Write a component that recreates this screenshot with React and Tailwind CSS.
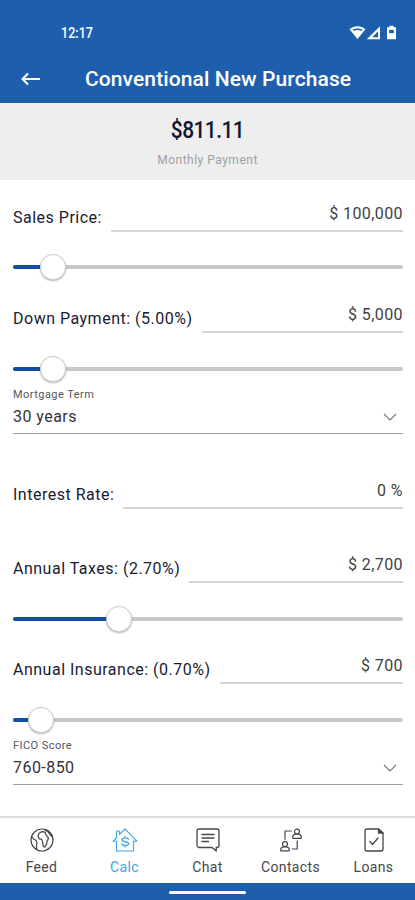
import React, { useState } from 'react';

const fields = {
    price: { label: "Sales Price:", value: "$ 100,000" },
    down: { label: "Down Payment: (5.00%)", value: "$ 5,000" },
    rate: { label: "Interest Rate:", value: "0 %" },
    taxes: { label: "Annual Taxes: (2.70%)", value: "$ 2,700" },
    insurance: { label: "Annual Insurance: (0.70%)", value: "$ 700" },
};

const FeedIcon = () => (
    <svg width="24" height="24" viewBox="0 0 24 24" fill="none" stroke="currentColor" strokeWidth="1.2" strokeLinejoin="round">
        <circle cx="12" cy="12" r="11" />
        <path d="M1.8 8.5 3.4 11l2.8 1.6.8 2.5-.6 2.5.4 4.2" />
        <path d="M9 5.2 12 3.6l3 .6 1.4 3.2 2.2 3-1.6 3-.4 3-2 2.8-1.4-1-.7-4.6-.8-2.2-2.6-.6-1.1-3z" />
        <path d="M15 1.8l3 1.4 2.5 3.2 1.6 2.1" strokeWidth="2" />
    </svg>
);

const CalcIcon = () => (
    <svg width="26" height="24" viewBox="0 0 26 24" fill="none" stroke="currentColor" strokeWidth="1.1" strokeLinejoin="round" strokeLinecap="round">
        <path d="M4.5 13.3H1L4.6 9.5V3h3v3.4L13 1l12 12.3h-3.5V23h-17z" />
        <path d="M16.4 11.2c-.5-.9-1.8-1.3-3.2-1.3-1.9 0-3.2.7-3.2 1.9 0 2.8 6.6 1 6.6 3.8 0 1.3-1.3 2-3.3 2-1.7 0-2.9-.5-3.5-1.5M13.1 8.6v1.3M13.1 17.6v1.2" strokeWidth="1.4" />
    </svg>
);

const ChatIcon = () => (
    <svg width="24" height="24" viewBox="0 0 24 24" fill="none" stroke="currentColor" strokeWidth="1.3" strokeLinejoin="round" strokeLinecap="round">
        <path d="M3 1h18a2 2 0 0 1 2 2v14.5a2 2 0 0 1-2 2h-.8V23L16 19.5H3a2 2 0 0 1-2-2V3a2 2 0 0 1 2-2z" />
        <path d="M6 6.5h12M6 10h12M6 13.5h6.5" />
    </svg>
);

const ContactsIcon = () => (
    <svg width="24" height="24" viewBox="0 0 24 24" fill="none" stroke="currentColor" strokeWidth="1.2" strokeLinejoin="round">
        <circle cx="18" cy="3.6" r="2.5" />
        <path d="M13.8 10.3V8.8c0-1.4 1.2-2.2 2.6-2.6h3.2c1.4.4 2.6 1.2 2.6 2.6v1.5z" />
        <circle cx="6" cy="16.1" r="2.5" />
        <path d="M1.8 22.9v-1.5c0-1.4 1.2-2.2 2.6-2.6h3.2c1.4.4 2.6 1.2 2.6 2.6v1.5zM6 11.8V3h6.8M18.2 12.4V21h-5.5" />
    </svg>
);

const LoansIcon = () => (
    <svg width="20" height="24" viewBox="0 0 20 24" fill="none" stroke="currentColor" strokeWidth="1.3" strokeLinejoin="round" strokeLinecap="round">
        <path d="M14.5 1H3a2 2 0 0 0-2 2v18a2 2 0 0 0 2 2h14a2 2 0 0 0 2-2V5z" />
        <path d="M14.5 1v4H19z" fill="currentColor" />
        <path d="m6 13.5 2.5 3L14 10" />
    </svg>
);

const tabs = [
    { name: "Feed", icon: FeedIcon },
    { name: "Calc", icon: CalcIcon },
    { name: "Chat", icon: ChatIcon },
    { name: "Contacts", icon: ContactsIcon },
    { name: "Loans", icon: LoansIcon },
];

const StatusBar = () => (
    <div className="flex h-[55px] items-end justify-between pl-[61px] pr-[17px] pb-[13px]">
        <span className="origin-left scale-x-90 text-[14px] leading-[18px] font-medium">12:17</span>
        <svg width="49" height="16" viewBox="0 0 49 16" className="mb-px">
            <path d="M.5 4.2C4.8.2 12.2.2 16.5 4.2L8.5 14z" fill="white" />
            <path d="M3.6 4.8c3-1.9 6.8-1.9 9.8 0l-1 1.2c-2.4-1.3-5.4-1.3-7.8 0z" fill="#1e5fad" />
            <path d="M31 1.2v13H17.8zM29 6.3l-5.6 5.9H29z" fill="white" fillRule="evenodd" />
            <path d="M40.5 .8h4v1.5H47v11.9h-9V2.3h2.5z" fill="white" />
            <path d="M40.2 4.8h4.6v3.4h-4.6z" fill="#1e5fad" />
        </svg>
    </div>
);

const Field = ({ label, value }) => (
    <div className="flex h-[38px] items-start">
        <span className="mt-[13px] mr-[9px] text-[16px] leading-[20px] tracking-[0.5px] text-[#181b33] whitespace-nowrap">{label}</span>
        <div className="h-[37px] flex-1 border-b-2 border-[#d4d4d4] pt-[9px] text-right text-[16px] leading-[20px] tracking-[0.4px] text-[#3f3f44]">
            {value}
        </div>
    </div>
);

// Knob position is measured in pixels from the left end of the track
const Slider = ({ position }) => (
    <div className="relative flex h-[26px] items-center">
        <div className="h-[4px] w-full rounded-full bg-[#c8c8c8]">
            <div className="h-full rounded-full bg-[#124da3]" style={{ width: position }} />
        </div>
        <div
            className="absolute top-0 size-[26px] -translate-x-1/2 rounded-full border border-[#cfcfcf] bg-white shadow-[0_1px_2px_rgba(0,0,0,0.3)]"
            style={{ left: position }}
        />
    </div>
);

const Select = ({ label, value }) => (
    <div className="h-[46px] border-b border-[#9f9f9f]">
        <div className="text-[11px] leading-[14px] tracking-[0.45px] text-[#55555a]">{label}</div>
        <div className="mt-[5px] flex items-center justify-between pr-[6px] text-[16px] leading-[20px] tracking-[0.45px] text-[#333338]">
            {value}
            <svg width="14" height="8" viewBox="0 0 14 8" fill="none" stroke="#77777b" strokeWidth="1.1">
                <path d="m1 1 6 6 6-6" />
            </svg>
        </div>
    </div>
);

const App = () => {
    const [activeTab, setActiveTab] = useState("Calc");

    return (
        <div className="flex h-[900px] w-[415px] flex-col overflow-hidden bg-white font-['Roboto',sans-serif]">
            <header className="h-[103px] bg-[#1e5fad] text-white">
                <StatusBar />
                <div className="flex h-[48px] items-center pl-[21px]">
                    <svg width="19" height="14" viewBox="0 0 19 14" fill="none" stroke="currentColor" strokeWidth="2">
                        <path d="M19 7H2M7 1.5 1.5 7 7 12.5" />
                    </svg>
                    <h1 className="ml-[45px] text-[21px] leading-[24px] font-medium tracking-[0.1px]">Conventional New Purchase</h1>
                </div>
            </header>

            <section className="h-[77px] bg-[#eeeeee] pt-[13px] text-center">
                <div className="scale-x-[0.87] text-[24px] leading-[28px] font-medium tracking-[-0.6px] text-[#10162f]">$811.11</div>
                <div className="mt-[8px] text-[12px] leading-[16px] tracking-[0.5px] text-[#a0a0a3]">Monthly Payment</div>
            </section>

            <main className="flex-1 px-[12px] pl-[13px]">
                <div className="pt-[15px]"><Field {...fields.price} /></div>
                <div className="mt-[21px]"><Slider position={39.5} /></div>
                <div className="mt-[16px]"><Field {...fields.down} /></div>
                <div className="mt-[22px]"><Slider position={39.5} /></div>
                <div className="mt-[6px]"><Select label="Mortgage Term" value="30 years" /></div>
                <div className="mt-[38px]"><Field {...fields.rate} /></div>
                <div className="mt-[36px]"><Field {...fields.taxes} /></div>
                <div className="mt-[22px]"><Slider position={105.5} /></div>
                <div className="mt-[15px]"><Field {...fields.insurance} /></div>
                <div className="mt-[22px]"><Slider position={28} /></div>
                <div className="mt-[6px]"><Select label="FICO Score" value="760-850" /></div>
            </main>

            <nav className="grid h-[67px] grid-cols-5 border-t-2 border-[#dddddd]">
                {tabs.map(({ name, icon: Icon }) => (
                    <button
                        key={name}
                        onClick={() => setActiveTab(name)}
                        className={`flex flex-col items-center pt-[10px] ${activeTab === name ? "text-[#42a5e5]" : "text-[#47474a]"}`}
                    >
                        <Icon />
                        <span className="mt-[6px] text-[14px] leading-[18px] tracking-[0.35px]">{name}</span>
                    </button>
                ))}
            </nav>
            <div className="flex h-[17px] justify-center bg-[#1e5fad] pt-[8px]">
                <div className="h-[3px] w-[77px] rounded-full bg-white" />
            </div>
        </div>
    );
};

export default App;
